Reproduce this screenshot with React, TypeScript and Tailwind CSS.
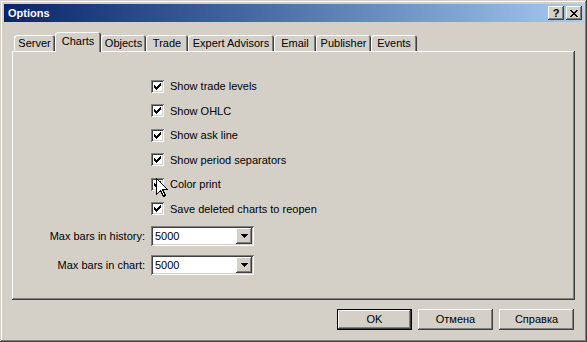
import React from "react";

const FONT = { fontFamily: '"Liberation Sans", Arial, sans-serif' };

const RAISED =
  "shadow-[inset_-1px_-1px_#404040,inset_1px_1px_#ffffff,inset_-2px_-2px_#808080,inset_2px_2px_#d4d0c8]";
const SUNKEN =
  "shadow-[inset_1px_1px_#808080,inset_-1px_-1px_#ffffff,inset_2px_2px_#404040,inset_-2px_-2px_#d4d0c8]";
const TAB_EDGE = "shadow-[inset_1px_1px_#ffffff,inset_-1px_0_#404040,inset_-2px_0_#808080]";

const TABS = [
  { label: "Server", w: "w-[41px]" },
  { label: "Charts", w: "w-[46px]", active: true },
  { label: "Objects", w: "w-[45px]" },
  { label: "Trade", w: "w-[42px]" },
  { label: "Expert Advisors", w: "w-[86px]" },
  { label: "Email", w: "w-[42px]" },
  { label: "Publisher", w: "w-[55px]" },
  { label: "Events", w: "w-[46px]" },
];

const OPTIONS = [
  "Show trade levels",
  "Show OHLC",
  "Show ask line",
  "Show period separators",
  "Color print",
  "Save deleted charts to reopen",
];

function Check() {
  // classic 7x7 pixel tick
  const cols = [2, 3, 4, 3, 2, 1, 0];
  return (
    <svg width="7" height="7" viewBox="0 0 7 7" className="absolute left-[3px] top-[3px]" shapeRendering="crispEdges">
      {cols.map((y, x) => (
        <rect key={x} x={x} y={y} width="1" height="3" fill="#000" />
      ))}
    </svg>
  );
}

function CheckBox() {
  return (
    <span className={`relative block w-[13px] h-[13px] bg-white ${SUNKEN}`}>
      <Check />
    </span>
  );
}

function Combo({ value }: { value: string }) {
  return (
    <div className={`flex items-center w-[103px] h-[20px] bg-white p-[2px] ${SUNKEN}`}>
      <span className="flex-1 pl-[2px] text-[11px] leading-none text-black">{value}</span>
      <span className={`flex items-center justify-center w-[16px] h-[16px] bg-[#d4d0c8] ${RAISED}`}>
        <svg width="7" height="4" viewBox="0 0 7 4" shapeRendering="crispEdges">
          <path d="M0 0h7v1H0zM1 1h5v1H1zM2 2h3v1H2zM3 3h1v1H3z" fill="#000" />
        </svg>
      </span>
    </div>
  );
}

function Btn({ label, def }: { label: string; def?: boolean }) {
  return (
    <div
      className={`flex items-center justify-center w-[75px] h-[21px] bg-[#d4d0c8] text-[11px] text-black ${
        def ? "border border-black" : ""
      } ${RAISED}`}
    >
      {label}
    </div>
  );
}

export default function App() {
  return (
    <div
      className="relative w-[587px] h-[342px] bg-[#d4d0c8] p-[4px] flex flex-col shadow-[inset_-1px_-1px_#404040,inset_1px_1px_#d4d0c8,inset_-2px_-2px_#808080,inset_2px_2px_#ffffff]"
      style={FONT}
    >
      {/* Title bar */}
      <div className="flex items-center h-[18px] bg-linear-to-r from-[#0a246a] to-[#a6caf0] pl-[4px] pr-[1px]">
        <span className="flex-1 text-[11px] font-bold text-white">Options</span>
        <div className="flex gap-[2px]">
          <span className={`flex items-center justify-center w-[16px] h-[14px] bg-[#d4d0c8] text-[11px] font-bold leading-none text-black ${RAISED}`}>
            ?
          </span>
          <span className={`flex items-center justify-center w-[16px] h-[14px] bg-[#d4d0c8] ${RAISED}`}>
            <svg width="8" height="7" viewBox="0 0 8 7" shapeRendering="crispEdges">
              <path
                d="M0 0h2v1H0zM6 0h2v1H6zM1 1h2v1H1zM5 1h2v1H5zM2 2h4v1H2zM3 3h2v1H3zM2 4h4v1H2zM1 5h2v1H1zM5 5h2v1H5zM0 6h2v1H0zM6 6h2v1H6z"
                fill="#000"
              />
            </svg>
          </span>
        </div>
      </div>

      {/* Tabs + panel */}
      <div className="flex flex-col px-[8px] pt-[10px]">
        <div className="flex items-end h-[19px] pl-[2px]">
          {TABS.map((t) =>
            t.active ? (
              <div
                key={t.label}
                className={`relative z-10 mb-[-1px] flex items-center justify-center h-[20px] pb-[2px] bg-[#d4d0c8] rounded-t-[3px] ${t.w} text-[11px] text-black ${TAB_EDGE}`}
              >
                {t.label}
              </div>
            ) : (
              <div
                key={t.label}
                className={`flex items-center justify-center h-[16px] bg-[#d4d0c8] rounded-t-[3px] ${t.w} text-[11px] text-black ${TAB_EDGE}`}
              >
                {t.label}
              </div>
            )
          )}
        </div>

        <div className="relative h-[249px] shadow-[inset_-1px_-1px_#404040,inset_1px_1px_#ffffff,inset_-2px_-2px_#808080]">
          <div className="flex flex-col pt-[23px] pl-[139px]">
            {OPTIONS.map((o) => (
              <div key={o} className="flex items-center gap-[6px] h-[24.5px]">
                <CheckBox />
                <span className="text-[11px] text-black">{o}</span>
              </div>
            ))}
          </div>

          <div className="flex flex-col gap-[9px] mt-[5px]">
            <div className="flex items-center">
              <span className="w-[139px] pr-[6px] text-right text-[11px] text-black">Max bars in history:</span>
              <Combo value="5000" />
            </div>
            <div className="flex items-center">
              <span className="w-[139px] pr-[6px] text-right text-[11px] text-black">Max bars in chart:</span>
              <Combo value="5000" />
            </div>
          </div>
        </div>
      </div>

      {/* Buttons */}
      <div className="flex justify-end gap-[6px] pt-[9px] pr-[9px]">
        <Btn label="OK" def />
        <Btn label="Отмена" />
        <Btn label="Справка" />
      </div>

      {/* Mouse cursor */}
      <svg
        className="absolute left-[156px] top-[178px]"
        width="13"
        height="20"
        viewBox="0 0 13 20"
        shapeRendering="crispEdges"
      >
        <path d="M0.5 0.5 L0.5 16.5 L4.5 12.5 L7.5 18.5 L9.5 17.5 L6.5 11.5 L11.5 11.5 Z" fill="#fff" stroke="#000" />
      </svg>
    </div>
  );
}
